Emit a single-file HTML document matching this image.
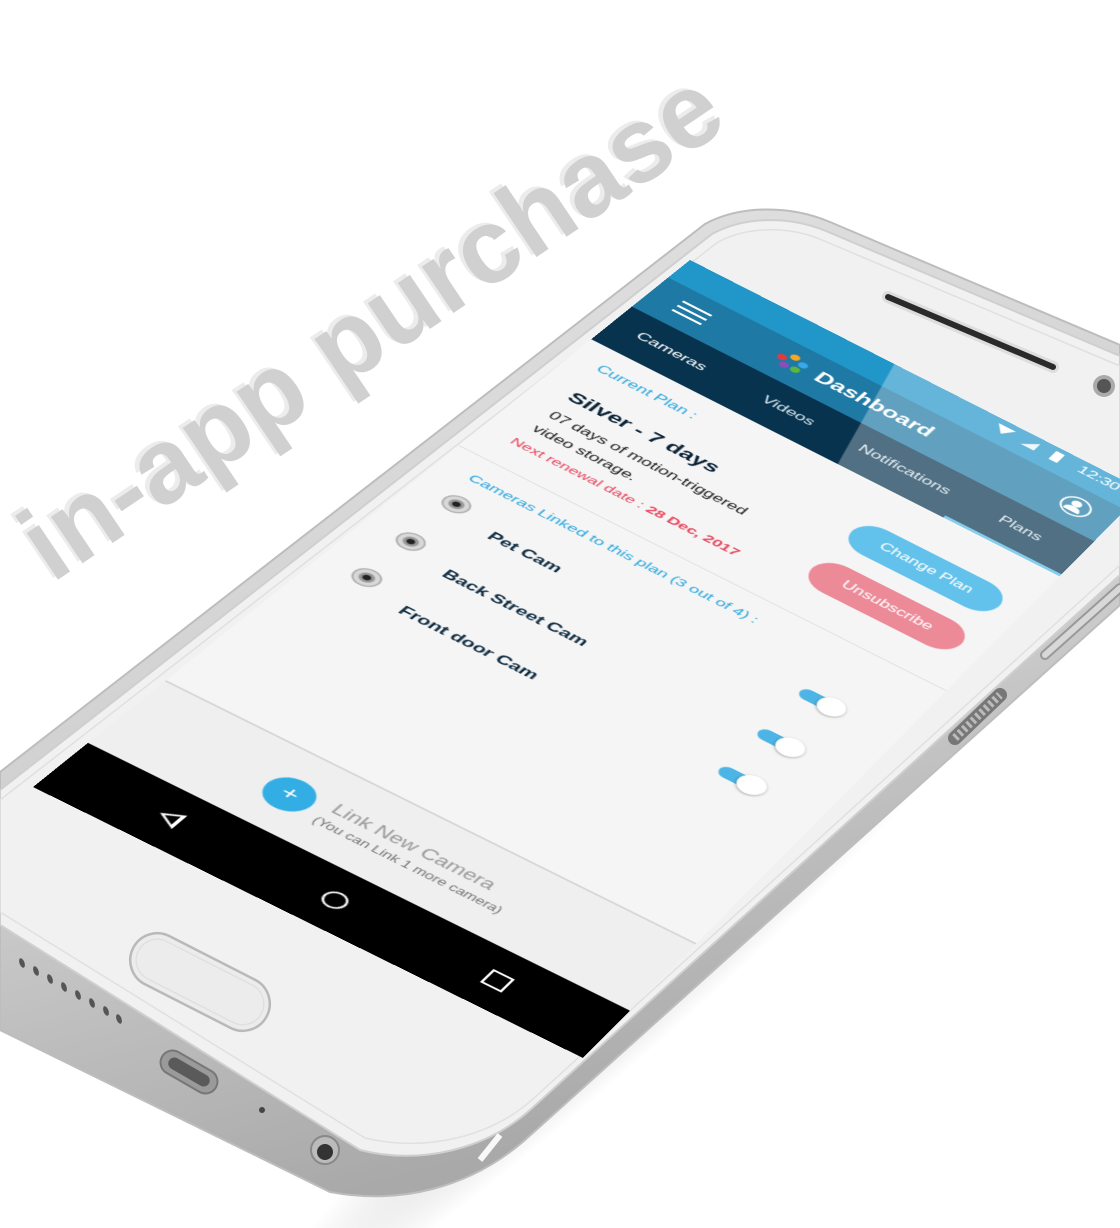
<!DOCTYPE html>
<html><head><meta charset="utf-8">
<style>
html,body{margin:0;padding:0;background:#fff;}
body{width:1120px;height:1228px;position:relative;overflow:hidden;font-family:"Liberation Sans",sans-serif;}
#bgtext{position:absolute;left:48px;top:578px;transform-origin:0 0;transform:rotate(-34deg) translateY(-82px);font-size:106px;font-weight:bold;color:#d0d0d0;white-space:nowrap;line-height:1;text-shadow:-3px -4px 0 #ececec;}
svg.body{position:absolute;left:0;top:0;}
#app{position:absolute;left:0;top:0;width:480px;height:960px;transform-origin:0 0;
transform:matrix3d(0.96646,0.49010,0,0.000018035,-0.69007,0.41310,0,-0.00017263,0,0,1,0,690,260,0,1);
background:#f5f5f5;overflow:hidden;color:#0b2236;}
#app div{position:absolute;}
.tab{top:100px;height:66px;width:120px;text-align:center;line-height:64px;font-size:17px;color:#d6e6ef;}
.row{font-size:17px;font-weight:bold;color:#0d2a40;left:84px;}
.cam{left:30px;width:24px;height:24px;border-radius:50%;background:radial-gradient(circle,#222 0 3px,#999 4px 6px,#d8d8d8 7px 10px,#aaa 11px);}
.tg{left:385px;width:38px;height:15px;border-radius:8px;background:#4db5e6;}
.tg i{position:absolute;left:18px;top:-5px;width:25px;height:25px;border-radius:50%;background:#fff;box-shadow:0 1px 3px rgba(0,0,0,.35);}
</style></head><body>
<div id="bgtext">in-app purchase</div>

<svg class="body" width="1120" height="1228" viewBox="0 0 1120 1228">
<defs>
<linearGradient id="side" x1="0" y1="0" x2="0.3" y2="1">
<stop offset="0" stop-color="#e4e4e4"/><stop offset="0.6" stop-color="#cfcfcf"/><stop offset="1" stop-color="#a9a9a9"/></linearGradient>
<radialGradient id="sh" cx="0.5" cy="0.5" r="0.5"><stop offset="0" stop-color="#000" stop-opacity=".18"/><stop offset="1" stop-color="#000" stop-opacity="0"/></radialGradient>
</defs>
<ellipse cx="640" cy="980" rx="520" ry="60" transform="rotate(-42 640 980)" fill="url(#sh)"/>
<path d="M705 224 C740 205 790 205 830 222 L1120 345 L1120 605 L525 1140 C470 1188 400 1205 330 1192 L0 1030 L0 772 Z" fill="url(#side)" stroke="#bdbdbd" stroke-width="2"/>
<path d="M712 234 C745 216 790 216 826 231 L1120 356 L1120 575 L530 1110 C485 1150 420 1165 360 1150 L0 925 L0 790 Z" fill="#f1f1f1" stroke="#cfcfcf" stroke-width="2"/>
<path d="M718 242 C748 226 790 226 822 240 L1120 366 L1120 565 L534 1098 C490 1138 425 1152 365 1138 L0 912 L0 800 Z" fill="none" stroke="#e0e0e0" stroke-width="1.5"/>
<line x1="888" y1="297" x2="1053" y2="367" stroke="#ddd" stroke-width="12" stroke-linecap="round"/>
<line x1="888" y1="297" x2="1053" y2="367" stroke="#2a2a2a" stroke-width="6" stroke-linecap="round"/>
<circle cx="1104" cy="386" r="11" fill="#aaa"/><circle cx="1104" cy="386" r="7" fill="#555"/>
<rect x="125" y="955" width="150" height="54" rx="27" transform="rotate(27 200 982)" fill="#ececec" stroke="#b9b9b9" stroke-width="2.5"/>
<rect x="131" y="961" width="138" height="42" rx="21" transform="rotate(27 200 982)" fill="none" stroke="#e0e0e0" stroke-width="1.5"/>
<g fill="#555">
<ellipse cx="22" cy="963" rx="2.5" ry="5" transform="rotate(-20 22 963)"/>
<ellipse cx="36" cy="971" rx="2.5" ry="5" transform="rotate(-20 36 971)"/>
<ellipse cx="50" cy="979" rx="2.5" ry="5" transform="rotate(-20 50 979)"/>
<ellipse cx="64" cy="987" rx="2.5" ry="5" transform="rotate(-20 64 987)"/>
<ellipse cx="78" cy="995" rx="2.5" ry="5" transform="rotate(-20 78 995)"/>
<ellipse cx="92" cy="1003" rx="2.5" ry="5" transform="rotate(-20 92 1003)"/>
<ellipse cx="106" cy="1011" rx="2.5" ry="5" transform="rotate(-20 106 1011)"/>
<ellipse cx="119" cy="1019" rx="2.5" ry="5" transform="rotate(-20 119 1019)"/>
</g>
<rect x="158" y="1060" width="62" height="24" rx="12" transform="rotate(30 189 1072)" fill="#9a9a9a" stroke="#777" stroke-width="2"/>
<rect x="166" y="1066" width="46" height="12" rx="6" transform="rotate(30 189 1072)" fill="#5a5a5a"/>
<circle cx="262" cy="1110" r="3" fill="#444"/>
<circle cx="325" cy="1150" r="14" fill="#bbb" stroke="#888" stroke-width="2"/><circle cx="325" cy="1152" r="8" fill="#333"/>
<line x1="480" y1="1160" x2="500" y2="1135" stroke="#f8f8f8" stroke-width="6"/>
<path d="M1045 655 L1120 588" stroke="#999" stroke-width="10" stroke-linecap="round"/>
<path d="M1045 655 L1120 588" stroke="#d8d8d8" stroke-width="6" stroke-linecap="round"/>
<path d="M955 738 L1000 695" stroke="#777" stroke-width="14" stroke-linecap="round"/>
<path d="M955 738 L1000 695" stroke="#bbb" stroke-width="8" stroke-dasharray="3 3"/>
</svg>

<div id="app">
  <div style="left:0;top:0;width:480px;height:38px;background:#2196c9;"></div>
  <div style="left:0;top:38px;width:480px;height:62px;background:#1e79a4;"></div>
  <div style="left:0;top:100px;width:480px;height:68px;background:#07334e;"></div>
  <div style="left:330px;top:8px;width:0;height:0;border-left:9px solid transparent;border-right:9px solid transparent;border-top:13px solid #fff;"></div>
  <div style="left:360px;top:8px;width:0;height:0;border-left:14px solid transparent;border-bottom:13px solid #e8f4fa;"></div>
  <div style="left:390px;top:6px;width:9px;height:16px;background:#fff;border-radius:1px;"></div>
  <div style="left:418px;top:4px;font-size:17px;color:#fff;">12:30</div>
  <div style="left:28px;top:58px;width:30px;height:3px;background:#fff;box-shadow:0 9px 0 #fff,0 18px 0 #fff;"></div>
  <div style="left:140px;top:54px;width:9px;height:9px;border-radius:50%;background:#f5a623;"></div>
  <div style="left:151px;top:59px;width:9px;height:9px;border-radius:50%;background:#3aa7e8;"></div>
  <div style="left:131px;top:62px;width:9px;height:9px;border-radius:50%;background:#e8383d;"></div>
  <div style="left:138px;top:71px;width:9px;height:9px;border-radius:50%;background:#8c4db8;"></div>
  <div style="left:149px;top:70px;width:9px;height:9px;border-radius:50%;background:#5cb83a;"></div>
  <div style="left:172px;top:54px;font-size:23px;font-weight:bold;color:#fff;">Dashboard</div>
  <div style="left:428px;top:52px;width:26px;height:26px;border-radius:50%;border:2px solid #fff;"></div>
  <div style="left:437px;top:58px;width:10px;height:10px;border-radius:50%;background:#fff;"></div>
  <div style="left:434px;top:68px;width:16px;height:8px;border-radius:8px 8px 2px 2px;background:#fff;"></div>
  <div class="tab" style="left:0;color:#fff;">Cameras</div>
  <div class="tab" style="left:120px;">Videos</div>
  <div class="tab" style="left:240px;">Notifications</div>
  <div class="tab" style="left:360px;">Plans</div>
  <div style="left:360px;top:164px;width:120px;height:4px;background:#4fb8e6;"></div>
  <div style="left:0;top:0;width:480px;height:170px;background:rgba(255,255,255,.3);clip-path:polygon(215px 0,480px 0,480px 170px,252px 170px);"></div>
  <div style="left:26px;top:191px;font-size:16px;color:#2aa7e0;">Current Plan :</div>
  <div style="left:30px;top:238px;font-size:22px;font-weight:bold;color:#0b2236;">Silver - 7 days</div>
  <div style="left:32px;top:274px;font-size:16px;color:#1a1a1a;line-height:26px;">07 days of motion-triggered<br>video storage.</div>
  <div style="left:28px;top:332px;font-size:15px;color:#e8475f;">Next renewal date : <b>28 Dec, 2017</b></div>
  <div style="left:309px;top:220px;width:150px;height:46px;border-radius:23px;background:#62c2ec;color:#fff;font-size:16px;text-align:center;line-height:46px;">Change Plan</div>
  <div style="left:309px;top:290px;width:150px;height:46px;border-radius:23px;background:#ec8a98;color:#fff;font-size:16px;text-align:center;line-height:46px;">Unsubscribe</div>
  <div style="left:0;top:378px;width:480px;height:1px;background:#dcdcdc;"></div>
  <div style="left:30px;top:400px;font-size:15.5px;color:#2aa7e0;">Cameras Linked to this plan (3 out of 4) :</div>
  <div class="cam" style="top:436px;"></div>
  <div class="cam" style="top:504px;"></div>
  <div class="cam" style="top:568px;"></div>
  <div class="row" style="top:454px;">Pet Cam</div>
  <div class="row" style="top:522px;">Back Street Cam</div>
  <div class="row" style="top:586px;">Front door Cam</div>
  <div class="tg" style="top:457px;"><i></i></div>
  <div class="tg" style="top:526px;"><i></i></div>
  <div class="tg" style="top:589px;"><i></i></div>
  <div style="left:0;top:792px;width:480px;height:2px;background:#d6d6d6;"></div>
  <div style="left:0;top:794px;width:480px;height:98px;background:#efefef;"></div>
  <div style="left:126px;top:825px;width:40px;height:40px;border-radius:50%;background:#32aee4;color:#fff;text-align:center;line-height:38px;font-size:22px;">+</div>
  <div style="left:180px;top:826px;font-size:18px;color:#9a9a9a;">Link New Camera</div>
  <div style="left:176px;top:850px;font-size:12.5px;color:#777;">(You can Link 1 more camera)</div>
  <div style="left:0;top:892px;width:480px;height:68px;background:#000;"></div>
  <div style="left:86px;top:915px;width:0;height:0;border-top:10px solid transparent;border-bottom:10px solid transparent;border-right:17px solid #fff;"></div>
  <div style="left:90px;top:919px;width:0;height:0;border-top:6px solid transparent;border-bottom:6px solid transparent;border-right:10px solid #000;"></div>
  <div style="left:230px;top:916px;width:16px;height:16px;border:2.5px solid #fff;border-radius:50%;"></div>
  <div style="left:374px;top:917px;width:15px;height:15px;border:2.5px solid #fff;"></div>
</div>
</body></html>
